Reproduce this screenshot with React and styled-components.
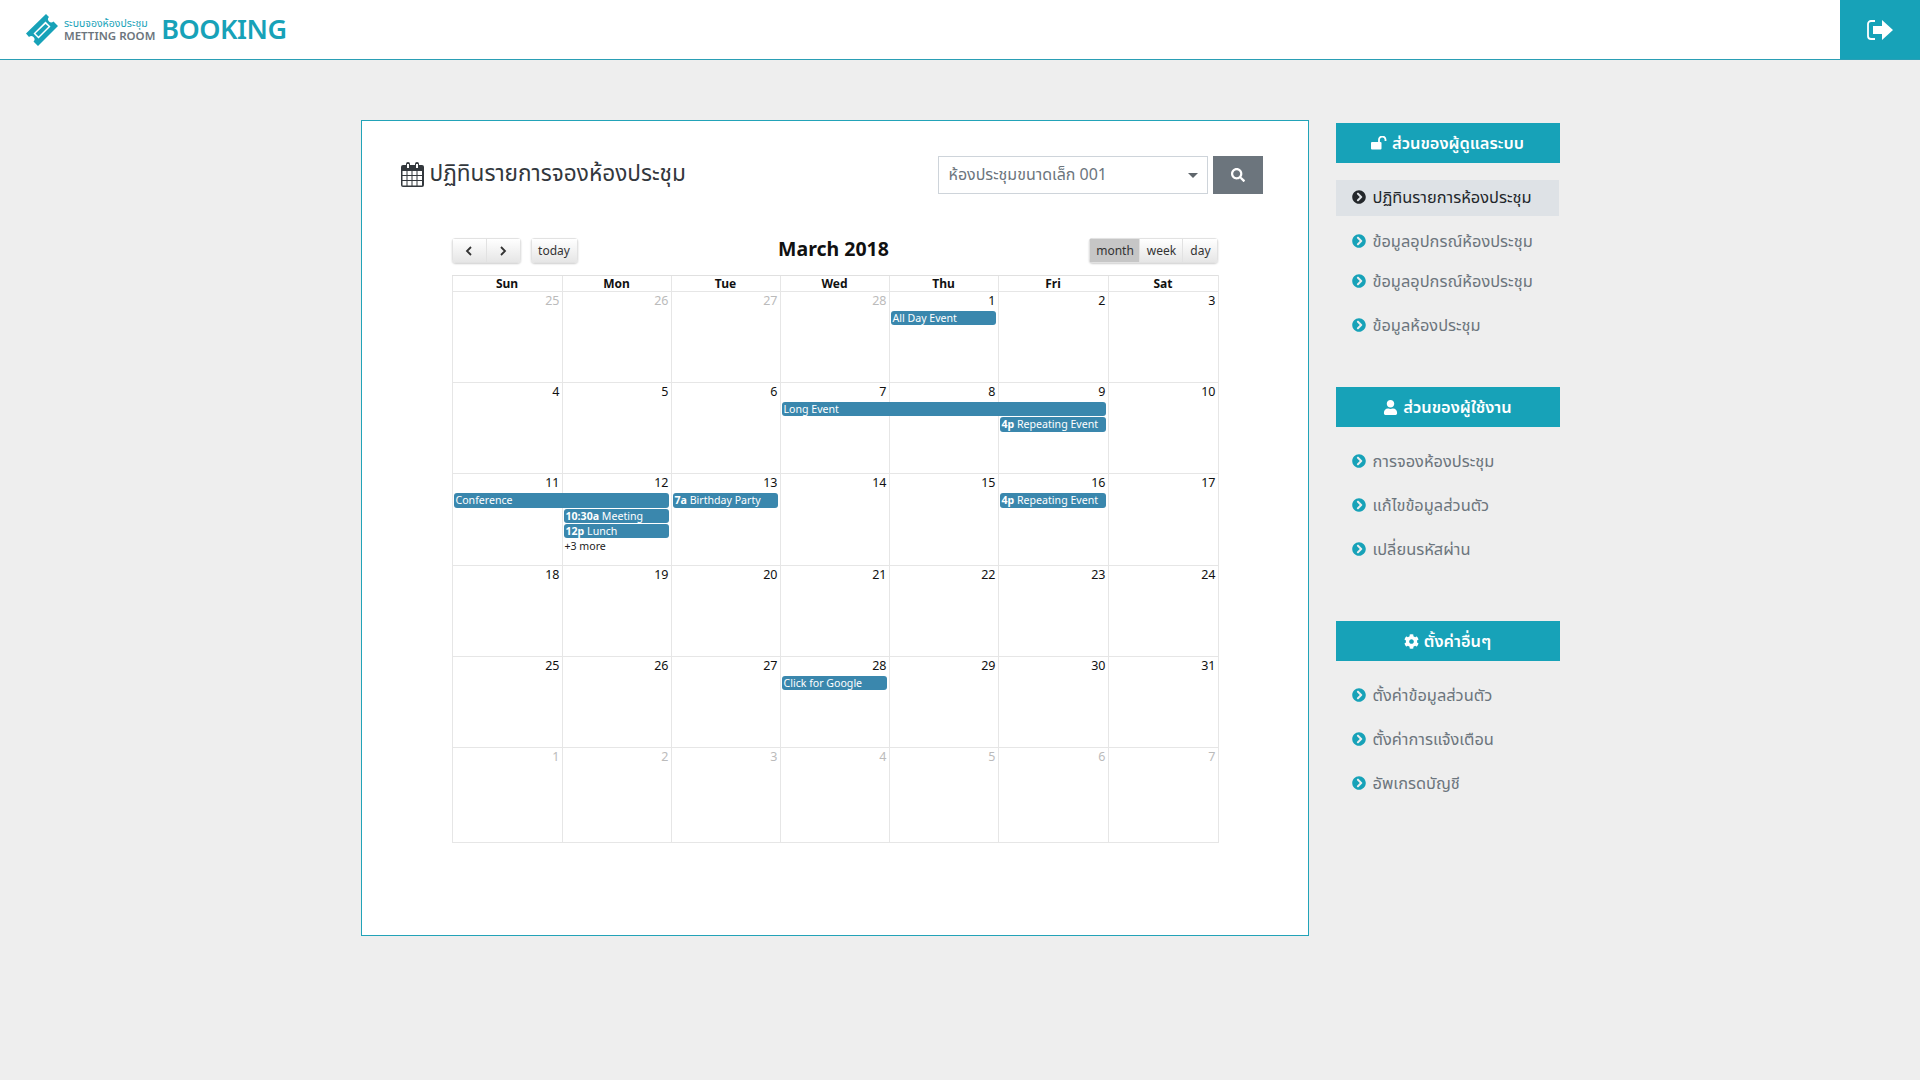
import React from 'react';
import styled, { createGlobalStyle } from 'styled-components';
import { FaChevronCircleRight, FaCog, FaSearch, FaUser } from 'react-icons/fa';

const THAI = `"Noto Sans", "Noto Sans Thai", "Open Sans", sans-serif`;
const CAL = `"Noto Sans", "DejaVu Sans", sans-serif`;
const TEAL = '#17a2b8';

const COLUMNS = ['Sun', 'Mon', 'Tue', 'Wed', 'Thu', 'Fri', 'Sat'];

const WEEKS = [
  {
    days: [[25, 1], [26, 1], [27, 1], [28, 1], [1], [2], [3]],
    events: [{ col: 5, row: 2, span: 1, title: 'All Day Event' }],
  },
  {
    days: [[4], [5], [6], [7], [8], [9], [10]],
    events: [
      { col: 4, row: 2, span: 3, title: 'Long Event' },
      { col: 6, row: 3, span: 1, time: '4p', title: 'Repeating Event' },
    ],
  },
  {
    days: [[11], [12], [13], [14], [15], [16], [17]],
    events: [
      { col: 1, row: 2, span: 2, title: 'Conference' },
      { col: 3, row: 2, span: 1, time: '7a', title: 'Birthday Party' },
      { col: 6, row: 2, span: 1, time: '4p', title: 'Repeating Event' },
      { col: 2, row: 3, span: 1, time: '10:30a', title: 'Meeting' },
      { col: 2, row: 4, span: 1, time: '12p', title: 'Lunch' },
    ],
    more: { col: 2, row: 5, label: '+3 more' },
  },
  {
    days: [[18], [19], [20], [21], [22], [23], [24]],
    events: [],
  },
  {
    days: [[25], [26], [27], [28], [29], [30], [31]],
    events: [{ col: 4, row: 2, span: 1, title: 'Click for Google' }],
  },
  {
    days: [[1, 1], [2, 1], [3, 1], [4, 1], [5, 1], [6, 1], [7, 1]],
    events: [],
    last: true,
  },
];

const UnlockIcon = () => (
  <svg width="16" height="14" viewBox="0 0 16 14">
    <path fill="#fff" d="M1 6h8.500a1 1 0 0 1 1 1v5.500a1 1 0 0 1-1 1H1a1 1 0 0 1-1-1V7a1 1 0 0 1 1-1z" />
    <path fill="none" stroke="#fff" strokeWidth="1.800" d="M8 6V4a3 3 0 0 1 6.500-.5V5" />
  </svg>
);

const MENU = [
  {
    icon: <UnlockIcon />,
    title: 'ส่วนของผู้ดูแลระบบ',
    top: 3,
    items: [
      { label: 'ปฏิทินรายการห้องประชุม', active: true },
      { label: 'ข้อมูลอุปกรณ์ห้องประชุม' },
      { label: 'ข้อมูลอุปกรณ์ห้องประชุม', tight: true },
      { label: 'ข้อมูลห้องประชุม' },
    ],
  },
  {
    icon: <FaUser />,
    title: 'ส่วนของผู้ใช้งาน',
    top: 43,
    items: [{ label: 'การจองห้องประชุม' }, { label: 'แก้ไขข้อมูลส่วนตัว' }, { label: 'เปลี่ยนรหัสผ่าน' }],
  },
  {
    icon: <FaCog />,
    title: 'ตั้งค่าอื่นๆ',
    top: 53,
    items: [{ label: 'ตั้งค่าข้อมูลส่วนตัว' }, { label: 'ตั้งค่าการแจ้งเตือน' }, { label: 'อัพเกรดบัญชี' }],
  },
];

const Chevron = ({ left }) => (
  <svg width="10" height="10" viewBox="0 0 10 10">
    <path
      fill="none"
      stroke="#333"
      strokeWidth="1.800"
      d={left ? 'M7 1L3 5l4 4' : 'M3 1l4 4-4 4'}
    />
  </svg>
);

const App = () => {
  return (
    <>
      <GlobalStyle />
      <TopBar>
        <Logo>
          <svg width="34" height="34" viewBox="0 0 34 34">
            <path
              fill={TEAL}
              fillRule="evenodd"
              d="M21 1l3 3a3 3 0 0 0 4.500 4.500L33 13 13 33l-4.500-4.500A3 3 0 0 0 4 24l-3-3.500zM20.500 8.500L8.500 20.500l5 5 12-12z"
            />
            <path fill={TEAL} d="M20.500 11l3 2.500-10 10-3-3z" />
          </svg>
          <LogoWords>
            <LogoThai>ระบบจองห้องประชุม</LogoThai>
            <LogoEnglish>METTING ROOM</LogoEnglish>
          </LogoWords>
          <LogoBooking>BOOKING</LogoBooking>
        </Logo>
        <ExitButton>
          <svg width="28" height="22" viewBox="0 0 28 22">
            <path fill="none" stroke="#fff" strokeWidth="1.800" d="M9 2H5a3 3 0 0 0-3 3v12a3 3 0 0 0 3 3h4" />
            <path fill="#fff" d="M7 7h9V1l11 10-11 10v-6H7z" />
          </svg>
        </ExitButton>
      </TopBar>

      <Main>
        <Panel>
          <PanelHead>
            <PanelTitle>
              <svg width="23" height="25" viewBox="0 0 23 25">
                <path
                  fill="#33383d"
                  fillRule="evenodd"
                  d="M2 3h3V2a2 2 0 0 1 4 0v1h5V2a2 2 0 0 1 4 0v1h3a2 2 0 0 1 2 2v18a2 2 0 0 1-2 2H2a2 2 0 0 1-2-2V5a2 2 0 0 1 2-2zM6 2v4h2V2zm9 0v4h2V2zM1.500 9v4h4V9zm5 0v4h4V9zm5 0v4h4V9zm5 0v4h4.500V9zM1.500 14v4h4v-4zm5 0v4h4v-4zm5 0v4h4v-4zm5 0v4h4.500v-4zM1.500 19v4.500h4V19zm5 0v4.500h4V19zm5 0v4.500h4V19zm5 0v4.500h4.500V19z"
                />
              </svg>
              ปฏิทินรายการจองห้องประชุม
            </PanelTitle>
            <RoomFilter>
              <RoomSelect>
                ห้องประชุมขนาดเล็ก 001
                <Caret />
              </RoomSelect>
              <SearchButton>
                <FaSearch />
              </SearchButton>
            </RoomFilter>
          </PanelHead>

          <Calendar>
            <Toolbar>
              <ToolGroup>
                <ButtonGroup>
                  <CalButton $w={35}>
                    <Chevron left />
                  </CalButton>
                  <CalButton $w={34}>
                    <Chevron />
                  </CalButton>
                </ButtonGroup>
                <ButtonGroup>
                  <CalButton $w={47}>today</CalButton>
                </ButtonGroup>
              </ToolGroup>
              <CalTitle>March 2018</CalTitle>
              <ButtonGroup>
                <CalButton $w={51} $active>
                  month
                </CalButton>
                <CalButton $w={43}>week</CalButton>
                <CalButton $w={35}>day</CalButton>
              </ButtonGroup>
            </Toolbar>

            <Grid>
              <DayHeaders>
                {COLUMNS.map((name) => (
                  <DayHeader key={name}>{name}</DayHeader>
                ))}
              </DayHeaders>
              {WEEKS.map((week, i) => (
                <Week key={i} $last={week.last}>
                  {week.days.map(([num, other], d) => (
                    <DayCell key={d} $col={d + 1} $muted={other}>
                      {num}
                    </DayCell>
                  ))}
                  {week.events.map((ev) => (
                    <Event key={ev.title + ev.col} $col={ev.col} $row={ev.row} $span={ev.span}>
                      {ev.time && <b>{ev.time} </b>}
                      {ev.title}
                    </Event>
                  ))}
                  {week.more && (
                    <MoreLink $col={week.more.col} $row={week.more.row}>
                      {week.more.label}
                    </MoreLink>
                  )}
                </Week>
              ))}
            </Grid>
          </Calendar>
        </Panel>

        <Sidebar>
          {MENU.map((section) => (
            <MenuSection key={section.title} $top={section.top}>
              <MenuHeader>
                {section.icon}
                {section.title}
              </MenuHeader>
              <MenuList>
                {section.items.map((item, i) => (
                  <MenuItem key={i} $active={item.active} $tight={item.tight}>
                    <FaChevronCircleRight />
                    {item.label}
                  </MenuItem>
                ))}
              </MenuList>
            </MenuSection>
          ))}
        </Sidebar>
      </Main>
    </>
  );
};

export default App;

const GlobalStyle = createGlobalStyle`
  html, body {
    margin: 0;
    background: #eeeeee;
    min-height: 1080px;
  }
  * {
    box-sizing: border-box;
  }
`;

const TopBar = styled.header`
  display: flex;
  justify-content: space-between;
  height: 60px;
  background: #fff;
  border-bottom: 1px solid #2a9fb5;
`;

const Logo = styled.div`
  display: flex;
  align-items: center;
  padding-left: 25px;
  font-family: ${THAI};
`;

const LogoWords = styled.div`
  display: flex;
  flex-direction: column;
  margin-left: 5px;
`;

const LogoThai = styled.span`
  font-size: 10.500px;
  line-height: 12px;
  color: ${TEAL};
`;

const LogoEnglish = styled.span`
  font-size: 11.500px;
  line-height: 13px;
  font-weight: 600;
  color: #6c757d;
`;

const LogoBooking = styled.span`
  margin: -2px 0 0 6px;
  font-size: 27px;
  font-weight: 600;
  letter-spacing: -0.5px;
  color: ${TEAL};
`;

const ExitButton = styled.div`
  display: flex;
  align-items: center;
  justify-content: center;
  width: 80px;
  height: 59px;
  background: ${TEAL};
`;

const Main = styled.main`
  display: flex;
  justify-content: center;
  align-items: flex-start;
  gap: 27px;
  padding-top: 60px;
`;

const Panel = styled.section`
  width: 948px;
  height: 816px;
  padding: 34px 45px 0 39px;
  background: #fff;
  border: 1px solid #22a3b8;
`;

const PanelHead = styled.div`
  display: flex;
  justify-content: space-between;
  align-items: flex-start;
`;

const PanelTitle = styled.h1`
  display: flex;
  align-items: center;
  gap: 6px;
  margin: 0;
  height: 38px;
  font-family: ${THAI};
  font-size: 22.600px;
  font-weight: 400;
  color: #33383d;
`;

const RoomFilter = styled.div`
  display: flex;
  gap: 5px;
  margin-top: 1px;
`;

const RoomSelect = styled.div`
  position: relative;
  width: 270px;
  height: 38px;
  padding: 0 10px;
  line-height: 35px;
  font-family: ${THAI};
  font-size: 16px;
  color: #6c757d;
  border: 1px solid #ced4da;
  background: #fff;
`;

const Caret = styled.span`
  position: absolute;
  right: 9px;
  top: 16px;
  border-style: solid;
  border-width: 5px 5px 0;
  border-color: #5f666c transparent transparent;
`;

const SearchButton = styled.div`
  display: flex;
  align-items: center;
  justify-content: center;
  width: 50px;
  height: 38px;
  color: #fff;
  background: #6c757d;
  font-size: 14px;
`;

const Calendar = styled.div`
  width: 767px;
  margin: 44px 0 0 51px;
  font-family: ${CAL};
`;

const Toolbar = styled.div`
  display: flex;
  justify-content: space-between;
  align-items: flex-start;
  height: 37px;
`;

const ToolGroup = styled.div`
  display: flex;
  gap: 10px;
`;

const ButtonGroup = styled.div`
  display: flex;
  height: 25px;
  border-radius: 4px;
  box-shadow: 0 1px 2px rgba(0, 0, 0, 0.2);
  overflow: hidden;
`;

const CalButton = styled.div`
  display: flex;
  align-items: center;
  justify-content: center;
  width: ${(p) => p.$w}px;
  font-size: 12px;
  color: #333;
  background: ${(p) => (p.$active ? '#c6c6c6' : 'linear-gradient(#fff, #e6e6e6)')};
  border: 1px solid #e2e2e2;
  border-left-width: 0;
  &:first-child {
    border-left-width: 1px;
  }
`;

const CalTitle = styled.h2`
  margin: 0;
  font-size: 19.500px;
  line-height: 21px;
  font-weight: 700;
  color: #111;
`;

const Grid = styled.div`
  border-right: 1px solid #e6e6e6;
`;

const COLUMN_TEMPLATE = '110px 109px 109px 109px 109px 110px 1fr';

const DayHeaders = styled.div`
  display: grid;
  grid-template-columns: ${COLUMN_TEMPLATE};
  height: 16px;
  border-top: 1px solid #e0e0e0;
`;

const DayHeader = styled.div`
  font-size: 12px;
  line-height: 15px;
  font-weight: 700;
  text-align: center;
  color: #111;
  border-left: 1px solid #e6e6e6;
`;

const Week = styled.div`
  display: grid;
  grid-template-columns: ${COLUMN_TEMPLATE};
  grid-template-rows: 19px repeat(4, 15.25px) 1fr;
  height: ${(p) => (p.$last ? 96 : 91.2)}px;
  border-top: 1px solid #e6e6e6;
  border-bottom: ${(p) => (p.$last ? '1px solid #e6e6e6' : '0')};
`;

const DayCell = styled.div`
  grid-column: ${(p) => p.$col};
  grid-row: 1 / -1;
  padding: 1px 2px 0 0;
  font-size: 12.500px;
  line-height: 15px;
  text-align: right;
  color: ${(p) => (p.$muted ? '#bbb' : '#111')};
  border-left: 1px solid #e6e6e6;
`;

const Event = styled.div`
  grid-column: ${(p) => p.$col} / span ${(p) => p.$span};
  grid-row: ${(p) => p.$row};
  margin: 0 2px 1px;
  padding: 0 2px;
  font-size: 10.600px;
  line-height: 14px;
  white-space: nowrap;
  overflow: hidden;
  color: #fff;
  background: #3a87ad;
  border-radius: 3px;
`;

const MoreLink = styled.div`
  grid-column: ${(p) => p.$col};
  grid-row: ${(p) => p.$row};
  margin-left: 3px;
  font-size: 10.600px;
  line-height: 14px;
  color: #222;
`;

const Sidebar = styled.aside`
  width: 224px;
`;

const MenuSection = styled.div`
  margin-top: ${(p) => p.$top}px;
`;

const MenuHeader = styled.div`
  display: flex;
  align-items: center;
  justify-content: center;
  gap: 5px;
  height: 40px;
  font-family: ${THAI};
  font-size: 16.400px;
  font-weight: 600;
  color: #fff;
  background: ${TEAL};
  svg {
    font-size: 15px;
  }
`;

const MenuList = styled.div`
  display: flex;
  flex-direction: column;
  gap: 8px;
  margin-top: 17px;
`;

const MenuItem = styled.div`
  display: flex;
  align-items: center;
  gap: 7px;
  height: 36px;
  width: 223px;
  margin-top: ${(p) => (p.$tight ? -4 : 0)}px;
  padding: 0 0 2px 16px;
  font-family: ${THAI};
  font-size: 16.400px;
  color: ${(p) => (p.$active ? '#23272b' : '#6c757d')};
  background: ${(p) => (p.$active ? '#dee2e6' : 'transparent')};
  svg {
    font-size: 14px;
    color: ${(p) => (p.$active ? '#23272b' : TEAL)};
  }
`;
